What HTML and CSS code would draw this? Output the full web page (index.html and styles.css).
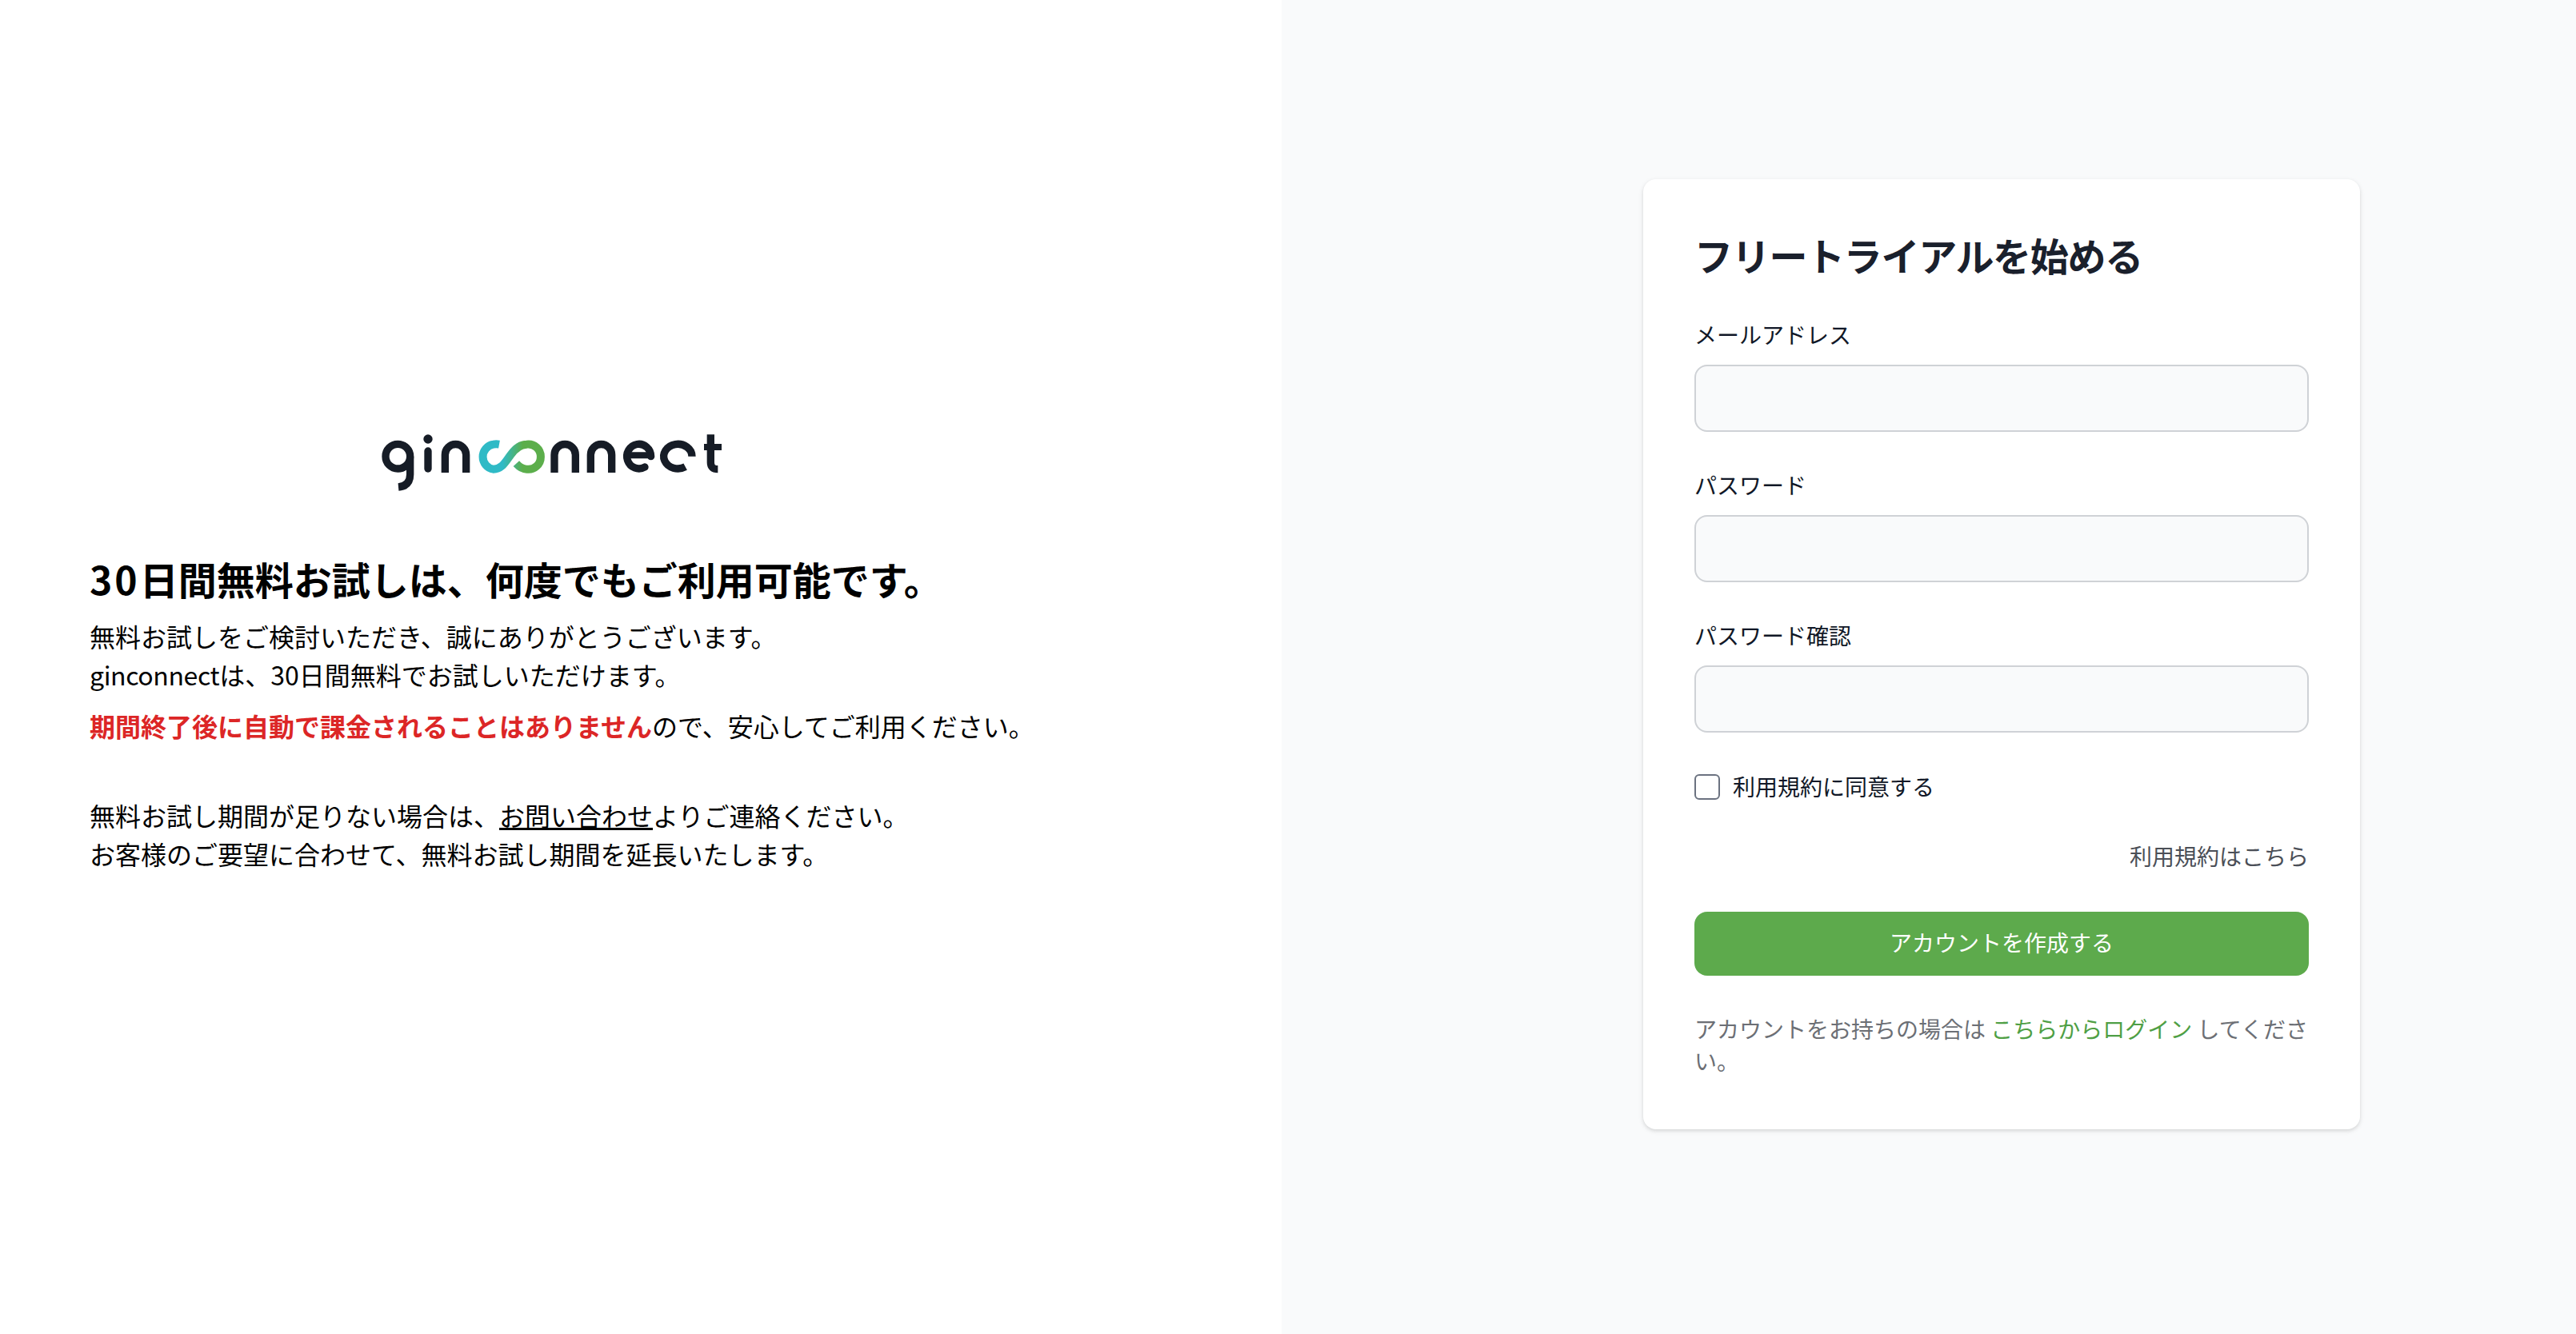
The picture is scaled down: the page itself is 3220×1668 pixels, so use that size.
FILE: index.html
```html
<!DOCTYPE html>
<html lang="ja">
<head>
<meta charset="utf-8">
<title>ginconnect フリートライアル</title>
<link rel="stylesheet" href="styles.css">
</head>
<body>
<main class="page">
  <section class="intro">
    <div class="intro-inner">
      <svg class="logo" viewBox="0 0 1584 330" role="img" aria-label="ginconnect">
        <defs>
          <linearGradient id="inf" gradientUnits="userSpaceOnUse" x1="565" y1="0" x2="640" y2="0">
            <stop offset="0" stop-color="#2fbac6"/>
            <stop offset="1" stop-color="#5cae4b"/>
          </linearGradient>
        </defs>
        <g class="logo-ink">
          <circle cx="172" cy="182" r="46"/>
          <path d="M218 182V250Q218 293 174 297"/>
          <path d="M285 162V228" stroke-linecap="round"/>
          <path d="M349 243V176A39.5 39.5 0 0 1 428 176V243"/>
          <path d="M759 243V176A39.5 39.5 0 0 1 838 176V243"/>
          <path d="M895 243V176A39.5 39.5 0 0 1 974 176V243"/>
          <path d="M1031 178H1130" stroke-width="24"/>
          <path d="M1121 182A45 46 0 1 0 1098 222" stroke-linecap="round"/>
          <path d="M1275 182A53 46 0 1 0 1250 221"/>
          <path d="M1345 100V205Q1345 230 1372 230"/>
          <path d="M1320 147H1386" stroke-width="24"/>
        </g>
        <circle class="logo-dot" cx="285" cy="117" r="17"/>
        <path class="logo-mark" d="M552 137Q541 135 530 137A46 47 0 0 0 530 230C562 230 575 203 595 176C610 155 628 137 655 137A46 47 0 1 1 655 230C640 230 626 220 616 209"/>
      </svg>
      <h1 class="intro-title"><span class="digits">30</span>日間無料お試しは、何度でもご利用可能です。</h1>
      <p>無料お試しをご検討いただき、誠にありがとうございます。<br><span class="brand">ginconnect</span>は、30日間無料でお試しいただけます。</p>
      <p class="note"><strong class="alert">期間終了後に自動で課金されることはありません</strong>ので、安心してご利用ください。</p>
      <p class="extend">無料お試し期間が足りない場合は、<a class="contact" href="#">お問い合わせ</a>よりご連絡ください。<br>お客様のご要望に合わせて、無料お試し期間を延長いたします。</p>
    </div>
  </section>
  <section class="signup">
    <form class="card">
      <h2 class="card-title">フリートライアルを始める</h2>
      <div class="field">
        <label class="field-label" for="email">メールアドレス</label>
        <input class="field-input" id="email" type="email">
      </div>
      <div class="field">
        <label class="field-label" for="password">パスワード</label>
        <input class="field-input" id="password" type="password">
      </div>
      <div class="field">
        <label class="field-label" for="confirm">パスワード確認</label>
        <input class="field-input" id="confirm" type="password">
      </div>
      <label class="agree"><input class="check" type="checkbox"><span class="agree-text">利用規約に同意する</span></label>
      <div class="terms"><a href="#">利用規約はこちら</a></div>
      <button class="submit" type="button"><span class="submit-text">アカウントを作成する</span></button>
      <p class="login"><span>アカウントをお持ちの場合は </span><a href="#">こちらからログイン</a><span> してくださ</span><br><span>い。</span></p>
    </form>
  </section>
</main>
</body>
</html>
```
FILE: styles.css
```css
* { box-sizing: border-box; }
html, body { margin: 0; height: 100%; }
body {
  font-family: "Noto Sans CJK JP", "Noto Sans", sans-serif;
  color: #000;
  background: #fff;
}
.page { display: flex; height: 1668px; }

.intro {
  width: 1602px;
  flex: none;
  background: #fff;
  padding: 510px 0 0 112px;
}
.intro-inner { width: 1184px; display: flex; flex-direction: column; }
.logo { width: 528px; height: 110px; align-self: center; margin-bottom: 71px; }
.logo-ink { fill: none; stroke: #161c26; stroke-width: 28; }
.logo-dot { fill: #161c26; }
.logo-mark { fill: none; stroke: url(#inf); stroke-width: 30; }
.intro-title { margin: 0 0 16px; font-size: 48px; line-height: 64px; font-weight: 700; }
.digits { letter-spacing: 3px; }
.intro p { margin: 0; font-size: 32px; line-height: 48px; white-space: nowrap; }
.brand { letter-spacing: -.4px; }
.intro .note { margin-top: 16px; }
.intro .extend { margin-top: 64px; }
.alert { color: #dc2626; font-weight: 700; }
.contact { color: inherit; text-decoration: underline; }

.signup {
  flex: 1;
  background: #f9fafb;
  display: flex;
  justify-content: flex-end;
  padding: 224px 270px 0 0;
}
.card {
  width: 896px;
  height: 1188px;
  padding: 64px;
  background: #fff;
  border-radius: 16px;
  box-shadow: 0 2px 6px rgba(0,0,0,.1), 0 2px 4px rgba(0,0,0,.06);
}
.card-title {
  margin: -4px 0 48px;
  font-size: 48px;
  line-height: 68px;
  font-weight: 700;
  letter-spacing: -1.3px;
  color: #1a202c;
}
.field { margin-bottom: 48px; }
.field-label { display: block; margin-bottom: 20px; font-size: 28px; line-height: 36px; color: #111827; }
.field-input {
  display: block;
  width: 100%;
  height: 84px;
  background: #f9fafb;
  border: 2px solid #cfd2d6;
  border-radius: 16px;
  outline: none;
}
.agree { display: flex; align-items: center; gap: 16px; min-height: 40px; font-size: 28px; line-height: 36px; color: #111827; }
.check {
  appearance: none;
  width: 32px;
  height: 32px;
  margin: 0;
  background: #fff;
  border: 2px solid #6b7280;
  border-radius: 6px;
}
.agree-text { margin-bottom: 2px; }
.terms { margin: 48px 0 52px; text-align: right; font-size: 28px; line-height: 36px; }
.terms a { color: #4b4f57; text-decoration: none; }
.submit {
  display: block;
  width: 100%;
  height: 80px;
  border: 0;
  border-radius: 16px;
  background: #5daa4c;
  color: #fff;
  font: inherit;
  font-size: 28px;
}
.submit-text { position: relative; top: -2px; }
.login { margin: 46px 0 0; font-size: 28px; line-height: 40px; color: #6c6f75; }
.login a { color: #4f9f45; text-decoration: none; }
```
